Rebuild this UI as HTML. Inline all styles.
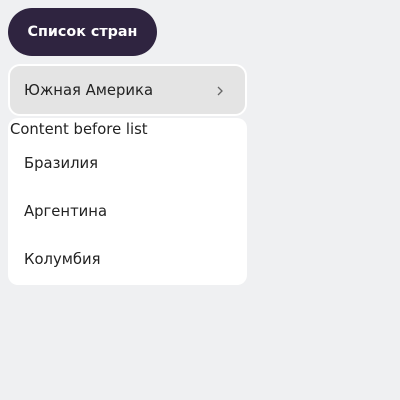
<!DOCTYPE html>
<html><head><style>
body{margin:0;width:400px;height:400px;background:#eff0f2;font-family:"DejaVu Sans",sans-serif;position:relative;overflow:hidden}
.btn{position:absolute;left:8px;top:8px;width:149px;height:48px;border-radius:24px;background:#2f2440;color:#fff;font-size:14.3px;font-weight:bold;line-height:48px;text-align:center}
.item{position:absolute;left:8px;top:64px;width:235px;height:48px;border:2px solid #fff;border-radius:12px;background:#e4e4e4;font-size:14.8px;color:#222;line-height:50px}
.item span{position:absolute;left:14px}
.item svg{position:absolute;left:205px;top:19px}
.list{position:absolute;left:8px;top:118px;width:239px;height:167px;background:#fff;border-radius:10px;color:#222}
.cb{position:absolute;left:2px;top:3px;font-size:14.8px}
.li{position:absolute;left:16px;font-size:14.8px}
</style></head><body>
<div class="btn">Список стран</div>
<div class="item"><span>Южная Америка</span><svg width="10" height="12" viewBox="0 0 10 12"><path d="M3 2 L7 6 L3 10" fill="none" stroke="#666" stroke-width="1.3"/></svg></div>
<div class="list">
<div class="cb">Content before list</div>
<div class="li" style="top:37px">Бразилия</div>
<div class="li" style="top:85px">Аргентина</div>
<div class="li" style="top:133px">Колумбия</div>
</div>
</body></html>
